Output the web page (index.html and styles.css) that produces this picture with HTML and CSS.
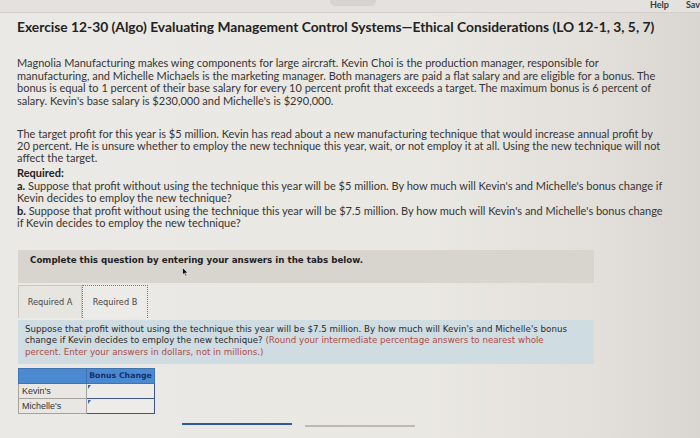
FILE: index.html
```html
<!DOCTYPE html>
<html>
<head>
<meta charset="utf-8">
<link rel="stylesheet" href="styles.css">
</head>
<body>
<div class="topbar">
  <span class="pill"></span>
  <span class="toplinks"><span class="help">Help</span><span class="save">Sav</span></span>
</div>
<main class="page">
  <h1 class="title">Exercise 12-30 (Algo) Evaluating Management Control Systems—Ethical Considerations (LO 12-1, 3, 5, 7)</h1>
  <p class="para p1">Magnolia Manufacturing makes wing components for large aircraft. Kevin Choi is the production manager, responsible for<br>manufacturing, and Michelle Michaels is the marketing manager. Both managers are paid a flat salary and are eligible for a bonus. The<br>bonus is equal to 1 percent of their base salary for every 10 percent profit that exceeds a target. The maximum bonus is 6 percent of<br>salary. Kevin's base salary is $230,000 and Michelle's is $290,000.</p>
  <p class="para p2">The target profit for this year is $5 million. Kevin has read about a new manufacturing technique that would increase annual profit by<br>20 percent. He is unsure whether to employ the new technique this year, wait, or not employ it at all. Using the new technique will not<br>affect the target.</p>
  <div class="para req">
    <div class="req-h">Required:</div>
    <div><b>a.</b> Suppose that profit without using the technique this year will be $5 million. By how much will Kevin's and Michelle's bonus change if<br>Kevin decides to employ the new technique?</div>
    <div><b>b.</b> Suppose that profit without using the technique this year will be $7.5 million. By how much will Kevin's and Michelle's bonus change<br>if Kevin decides to employ the new technique?</div>
  </div>

  <div class="instr">Complete this question by entering your answers in the tabs below.
    <svg class="cursor" width="7" height="10" viewBox="0 0 7 10"><path d="M0.5 0.5 L0.5 8 L2.3 6.3 L3.6 9.3 L4.8 8.8 L3.5 5.9 L6 5.9 Z" fill="#111" stroke="#fff" stroke-width="0.6"/></svg>
  </div>

  <div class="tabs">
    <div class="tab tab-a">Required A</div>
    <div class="tab tab-b">Required B</div>
  </div>

  <div class="qbox">Suppose that profit without using the technique this year will be $7.5 million. By how much will Kevin's and Michelle's bonus<br>change if Kevin decides to employ the new technique? <span class="red">(Round your intermediate percentage answers to nearest whole<br>percent. Enter your answers in dollars, not in millions.)</span></div>

  <table class="ans">
    <tr class="hd"><th class="lbl"></th><th class="col">Bonus Change</th></tr>
    <tr><td class="lbl">Kevin's</td><td class="inp"><span class="mark"></span></td></tr>
    <tr><td class="lbl">Michelle's</td><td class="inp"><span class="mark"></span></td></tr>
  </table>

  <div class="nav">
    <span class="bar blue"></span>
    <span class="bar grey"></span>
  </div>
</main>
</body>
</html>
```
FILE: styles.css
```css
html, body {
  margin: 0;
  padding: 0;
}
body {
  width: 700px;
  height: 438px;
  overflow: hidden;
  background: linear-gradient(90deg, #ebe9e5 0%, #eae8e3 60%, #e3e0db 85%, #d9d5d0 100%);
  font-family: Lato, "Liberation Sans", sans-serif;
  color: #2a2a2a;
  position: relative;
}
.topbar {
  height: 13px;
  background: #e4e2de;
  border-bottom: 1px solid #d3d0cb;
  box-sizing: border-box;
  display: flex;
  justify-content: flex-end;
  align-items: flex-start;
  position: relative;
}
.pill {
  position: absolute;
  left: 330px;
  top: -4px;
  width: 46px;
  height: 10px;
  border-radius: 5px;
  background: #d6d4d1;
}
.toplinks {
  display: flex;
  gap: 17px;
  font-size: 9px;
  font-weight: 700;
  color: #3a3a3a;
  line-height: 10px;
  margin-right: 0;
}
.page {
  padding-left: 17px;
}
.title {
  margin: 5px 0 0;
  font-size: 13.8px;
  line-height: 18px;
  font-weight: 700;
  color: #222;
  white-space: nowrap;
}
.para {
  font-size: 11px;
  line-height: 12.5px;
  margin: 0;
  white-space: nowrap;
  color: #353535;
}
.p1 { margin-top: 21px; }
.p2 { margin-top: 21px; line-height: 11.8px; }
.req { margin-top: 4px; }
.req-h, .req b { font-weight: 700; color: #222; }

.instr {
  margin-top: 20px;
  width: 576px;
  height: 33px;
  box-sizing: border-box;
  margin-left: 1px;
  padding: 5px 0 0 12px;
  background: #d8d5cf;
  font-family: "DejaVu Sans", Verdana, sans-serif;
  font-weight: 700;
  font-size: 8.7px;
  line-height: 11px;
  color: #1f1f1f;
  position: relative;
}
.cursor {
  position: absolute;
  left: 164px;
  top: 17px;
}
.tabs {
  margin-top: 2px;
  margin-left: 1px;
  display: flex;
  height: 33px;
}
.tab {
  box-sizing: border-box;
  height: 33px;
  font-family: "DejaVu Sans", Verdana, sans-serif;
  font-size: 8.2px;
  color: #444;
  display: flex;
  align-items: center;
  justify-content: center;
}
.tab-a {
  width: 64px;
  border: 1px solid #cbc8c3;
  border-bottom: none;
  background: #e7e5e0;
}
.tab-b {
  width: 66px;
  border: 1px dotted #7a7a7a;
  border-bottom: none;
  background: #edebe7;
}
.qbox {
  margin-top: 2px;
  margin-left: 1px;
  width: 576px;
  height: 44px;
  box-sizing: border-box;
  padding: 4px 0 0 7px;
  background: #cfdce2;
  font-family: "DejaVu Sans", Verdana, sans-serif;
  font-size: 8.7px;
  line-height: 11.5px;
  color: #2a2a2a;
  white-space: nowrap;
}
.red { color: #b04a44; }

.ans {
  margin-top: 4px;
  margin-left: 1px;
  border-collapse: collapse;
  font-family: "Liberation Sans", Arial, sans-serif;
  font-size: 9px;
}
.ans td, .ans th {
  padding: 0;
  box-sizing: border-box;
}
.ans .hd th {
  height: 15px;
  background: #4b8ad0;
  border: 1px solid #3f74b0;
}
.ans th.lbl { width: 68px; }
.ans th.col {
  width: 68px;
  color: #17306e;
  font-family: "DejaVu Sans", Verdana, sans-serif;
  font-weight: 700;
  font-size: 7.8px;
  text-align: center;
  white-space: nowrap;
}
.ans td.lbl {
  height: 15px;
  border: 1px solid #a5a29e;
  background: #e9e7e3;
  color: #333;
  padding-left: 3px;
  text-align: left;
}
.ans td.inp {
  border: 1.5px solid #3d5588;
  background: #edece8;
  position: relative;
  vertical-align: top;
}
.mark {
  position: absolute;
  left: 1px;
  top: 1px;
  width: 0;
  height: 0;
  border-top: 4px solid #3b66b5;
  border-right: 3px solid transparent;
}
.nav {
  display: flex;
  align-items: flex-start;
  gap: 13px;
  margin-top: 9px;
  margin-left: 165px;
}
.bar {
  display: block;
  height: 2px;
  width: 110px;
}
.bar.blue { background: #2f5b9c; }
.bar.grey { background: #bdbab6; margin-top: 2px; }
```
